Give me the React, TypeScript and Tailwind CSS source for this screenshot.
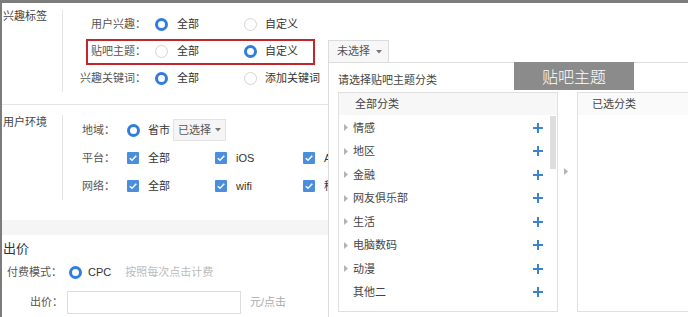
import React from 'react';

const Radio: React.FC<{ on?: boolean }> = ({ on }) => (
  <span
    className={
      on
        ? 'block w-[13px] h-[13px] shrink-0 rounded-full border-[3.5px] border-[#2f7de1] bg-white'
        : 'block w-[13px] h-[13px] shrink-0 rounded-full border border-[#d4d4d4] bg-white'
    }
  />
);

const Check: React.FC = () => (
  <span className="flex items-center justify-center w-[12px] h-[12px] shrink-0 rounded-[1px] bg-[#4a8fdf]">
    <svg width="10" height="10" viewBox="0 0 10 10">
      <polyline points="1.8,5.2 4,7.3 8.3,2.8" fill="none" stroke="#fff" strokeWidth="1.5" />
    </svg>
  </span>
);

const Caret: React.FC = () => (
  <svg width="6" height="4" viewBox="0 0 6 4" className="shrink-0">
    <polygon points="0,0 6,0 3,3.5" fill="#777" />
  </svg>
);

const Tri: React.FC = () => (
  <svg width="4" height="7" viewBox="0 0 4 7" className="block shrink-0">
    <polygon points="0,0 4,3.5 0,7" fill="#b3b3b3" />
  </svg>
);

const Plus: React.FC = () => (
  <svg width="10" height="10" viewBox="0 0 10 10" className="block shrink-0">
    <path d="M5 0v10M0 5h10" stroke="#3c82cf" strokeWidth="2" />
  </svg>
);

const categories = [
  { name: '情感', sub: true },
  { name: '地区', sub: true },
  { name: '金融', sub: true },
  { name: '网友俱乐部', sub: true },
  { name: '生活', sub: true },
  { name: '电脑数码', sub: true },
  { name: '动漫', sub: true },
  { name: '其他二', sub: false },
];

export default function App() {
  return (
    <div className="relative w-[688px] h-[317px] overflow-hidden bg-white border-t-[3px] border-l-[2px] border-[#7c7c7c] font-['Liberation_Sans','Noto_Sans_CJK_SC',sans-serif] text-[11px] text-[#444]">
      <div className="w-[326px] overflow-hidden">
        {/* 兴趣标签 */}
        <div className="flex h-[102px] border-b border-[#e6e6e6]">
          <div className="w-[60px] shrink-0 pl-[1px] pt-[7px] leading-[12px] text-[#444]">兴趣标签</div>
          <div className="relative mt-[7px] h-[82px] border-l border-[#e4e4e4] pt-[0.5px]">
            <div className="flex items-center h-[27px]">
              <span className="w-[83px] shrink-0 text-right text-[#555]">用户兴趣：</span>
              <span className="ml-[9px]"><Radio on /></span>
              <span className="ml-[9px] w-[67px] shrink-0 text-[#333]">全部</span>
              <Radio />
              <span className="ml-[8px] text-[#333]">自定义</span>
            </div>
            <div className="flex items-center h-[27px]">
              <span className="w-[83px] shrink-0 text-right text-[#555]">贴吧主题：</span>
              <span className="ml-[9px]"><Radio /></span>
              <span className="ml-[9px] w-[67px] shrink-0 text-[#333]">全部</span>
              <Radio on />
              <span className="ml-[8px] text-[#333]">自定义</span>
            </div>
            <div className="flex items-center h-[27px]">
              <span className="w-[83px] shrink-0 text-right text-[#555] whitespace-nowrap">兴趣关键词：</span>
              <span className="ml-[9px]"><Radio on /></span>
              <span className="ml-[9px] w-[67px] shrink-0 text-[#333]">全部</span>
              <Radio />
              <span className="ml-[8px] text-[#333] whitespace-nowrap">添加关键词</span>
            </div>
            <div className="absolute left-[23px] top-[29px] w-[229px] h-[26px] border-2 border-[#c3262b]" />
          </div>
        </div>

        {/* 用户环境 */}
        <div className="flex h-[115px]">
          <div className="w-[60px] shrink-0 pl-[1px] pt-[11px] leading-[12px] text-[#444]">用户环境</div>
          <div className="mt-[10px] h-[85px] shrink-0 border-l border-[#e4e4e4] pl-[19px] pt-[1px]">
            <div className="flex items-center h-[28px]">
              <span className="w-[45px] shrink-0 text-[#555]">地域：</span>
              <Radio on />
              <span className="ml-[8px] text-[#333]">省市</span>
              <span className="ml-[3px] flex items-center gap-[4px] h-[22px] px-[4px] border border-[#e2e2e2] bg-[#f5f5f5] text-[#555]">
                已选择 <Caret />
              </span>
            </div>
            <div className="flex items-center h-[28px]">
              <span className="w-[45px] shrink-0 text-[#555]">平台：</span>
              {['全部', 'iOS', 'Android'].map((t) => (
                <span key={t} className="flex items-center w-[88px] shrink-0 whitespace-nowrap">
                  <Check />
                  <span className="ml-[9px] text-[#333]">{t}</span>
                </span>
              ))}
            </div>
            <div className="flex items-center h-[28px]">
              <span className="w-[45px] shrink-0 text-[#555]">网络：</span>
              {['全部', 'wifi', '移动网络'].map((t) => (
                <span key={t} className="flex items-center w-[88px] shrink-0 whitespace-nowrap">
                  <Check />
                  <span className="ml-[9px] text-[#333]">{t}</span>
                </span>
              ))}
            </div>
          </div>
        </div>

        <div className="h-[15px] bg-[#f5f5f5]" />

        {/* 出价 */}
        <div className="h-[28px] leading-[28px] pl-[1px] text-[13px] text-[#333]">出价</div>
        <div className="flex items-center h-[18px] pl-[5px]">
          <span className="text-[#555]">付费模式：</span>
          <span className="ml-[7px]"><Radio on /></span>
          <span className="ml-[6px] text-[#333]">CPC</span>
          <span className="ml-[14px] text-[#bbb]">按照每次点击计费</span>
        </div>
        <div className="flex items-center h-[23px] mt-[10px]">
          <span className="w-[61px] shrink-0 text-right text-[#555]">出价：</span>
          <span className="ml-[4px] w-[174px] h-[23px] shrink-0 border border-[#dcdcdc] bg-white" />
          <span className="ml-[9px] text-[#aaa]">元/点击</span>
        </div>
      </div>

      {/* 贴吧主题 dropdown */}
      <div className="absolute left-[326px] top-[37px] w-[380px] z-10">
        <div className="flex items-center gap-[6px] w-[61px] h-[22px] pl-[8px] border border-b-0 border-[#dcdcdc] bg-[#f7f7f7] text-[#555]">
          未选择 <Caret />
        </div>
        <div className="h-[260px] border-t border-l border-[#dcdcdc] bg-white pl-[9px] pt-[8px]">
          <div className="leading-[18px] text-[#444]">请选择贴吧主题分类</div>
          <div className="flex mt-[3px]">
            <div className="relative w-[220px] h-[220px] shrink-0 border border-[#e0e0e0] overflow-hidden">
              <div className="flex items-center h-[22px] pl-[16px] bg-[#f7f7f7] text-[#444]">全部分类</div>
              <div className="pt-[1px]">
                {categories.map((c) => (
                  <div key={c.name} className="flex items-center h-[23.5px] pl-[5px] pr-[14px]">
                    <span className="w-[9px] shrink-0">{c.sub && <Tri />}</span>
                    <span className="text-[#444]">{c.name}</span>
                    <span className="ml-auto"><Plus /></span>
                  </div>
                ))}
              </div>
              <div className="absolute right-[1px] top-[23px] w-[6px] h-[53px] bg-[#dedede]" />
            </div>
            <div className="w-[19px] shrink-0 pl-[6px] pt-[76px]">
              <Tri />
            </div>
            <div className="w-[130px] h-[220px] shrink-0 border border-r-0 border-[#e0e0e0]">
              <div className="flex items-center h-[22px] pl-[14px] bg-[#fafafa] text-[#444]">已选分类</div>
            </div>
          </div>
        </div>
      </div>

      <div className="absolute left-[512px] top-[59px] w-[120px] h-[28px] z-20 flex items-center justify-center bg-[#8b8b8b] text-white text-[16px] font-['Noto_Sans_CJK_SC',sans-serif] font-light">
        贴吧主题
      </div>
    </div>
  );
}
